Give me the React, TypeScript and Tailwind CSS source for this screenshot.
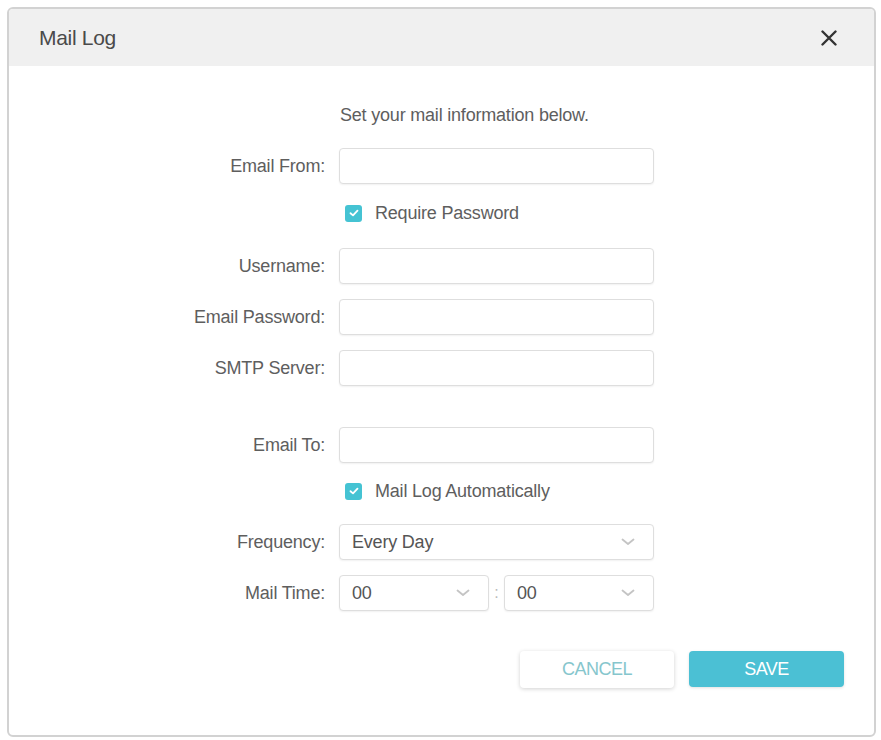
import React from "react";

const font = { fontFamily: '"Liberation Sans", Arial, sans-serif' };

function Label({ children }: { children: React.ReactNode }) {
  return (
    <div className="w-[316px] shrink-0 text-right text-[18px] leading-none text-[#5e5e5e] tracking-[-0.2px]">
      {children}
    </div>
  );
}

function TextInput() {
  return (
    <div className="ml-[14px] h-[36px] w-[315px] rounded-[4px] border border-[#dedede] bg-white shadow-[0_1px_2px_rgba(0,0,0,0.06)]" />
  );
}

function Chevron() {
  return (
    <svg width="14" height="8" viewBox="0 0 14 8" fill="none">
      <path d="M1.5 1.5 L7 6 L12.5 1.5" stroke="#c4c4c4" strokeWidth="1.8" strokeLinecap="round" strokeLinejoin="round" />
    </svg>
  );
}

function Select({ value, width }: { value: string; width: string }) {
  return (
    <div
      className={`flex h-[36px] ${width} items-center justify-between rounded-[4px] border border-[#dedede] bg-white pl-[12px] pr-[18px] text-[18px] text-[#555] tracking-[-0.2px] shadow-[0_1px_2px_rgba(0,0,0,0.06)]`}
    >
      <span>{value}</span>
      <Chevron />
    </div>
  );
}

function Check({ label }: { label: string }) {
  return (
    <div className="flex h-[24px] items-center">
      <div className="w-[316px] shrink-0" />
      <div className="ml-[20px] flex items-center">
        <div className="flex h-[17px] w-[17px] items-center justify-center rounded-[3px] bg-[#45c3d3]">
          <svg width="10" height="8" viewBox="0 0 10 8" fill="none">
            <path d="M1.5 4.2 L4 6.4 L8.5 1.6" stroke="white" strokeWidth="1.8" strokeLinecap="round" strokeLinejoin="round" />
          </svg>
        </div>
        <span className="ml-[13px] text-[18px] leading-none text-[#5e5e5e] tracking-[-0.2px]">{label}</span>
      </div>
    </div>
  );
}

function Row({ label, children, className = "" }: { label: string; children: React.ReactNode; className?: string }) {
  return (
    <div className={`flex items-center ${className}`}>
      <Label>{label}</Label>
      {children}
    </div>
  );
}

export default function App() {
  return (
    <div style={font} className="h-[740px] w-[881px] bg-white pl-[7px] pr-[5px] pt-[7px] pb-[3px]">
      <div className="flex h-full w-full flex-col overflow-hidden rounded-[6px] border-2 border-[#d2d2d2] bg-white">
        <div className="flex h-[57px] items-center justify-between bg-[#f0f0f0] pl-[30px] pr-[37px]">
          <span className="text-[21px] text-[#4a4a4a] tracking-[-0.3px]">Mail Log</span>
          <svg width="16" height="16" viewBox="0 0 16 16" fill="none">
            <path d="M1.5 1.5 L14.5 14.5 M14.5 1.5 L1.5 14.5" stroke="#333" strokeWidth="2.4" strokeLinecap="round" />
          </svg>
        </div>
        <div className="flex flex-col pt-[37px]">
          <div className="flex h-[24px] items-center">
            <div className="w-[316px] shrink-0" />
            <span className="ml-[15px] text-[18px] leading-none text-[#5e5e5e] tracking-[-0.2px]">
              Set your mail information below.
            </span>
          </div>
          <Row label="Email From:" className="mt-[21px]">
            <TextInput />
          </Row>
          <div className="mt-[17px]">
            <Check label="Require Password" />
          </div>
          <Row label="Username:" className="mt-[23px]">
            <TextInput />
          </Row>
          <Row label="Email Password:" className="mt-[15px]">
            <TextInput />
          </Row>
          <Row label="SMTP Server:" className="mt-[15px]">
            <TextInput />
          </Row>
          <Row label="Email To:" className="mt-[41px]">
            <TextInput />
          </Row>
          <div className="mt-[16px]">
            <Check label="Mail Log Automatically" />
          </div>
          <Row label="Frequency:" className="mt-[21px]">
            <div className="ml-[14px]">
              <Select value="Every Day" width="w-[315px]" />
            </div>
          </Row>
          <Row label="Mail Time:" className="mt-[15px]">
            <div className="ml-[14px] flex items-center">
              <Select value="00" width="w-[150px]" />
              <span className="w-[15px] text-center text-[16px] text-[#bbb]">:</span>
              <Select value="00" width="w-[150px]" />
            </div>
          </Row>
          <div className="mt-[40px] flex justify-end gap-[15px] pr-[30px]">
            <button className="h-[37px] w-[154px] rounded-[4px] bg-white text-[18px] text-[#86c6cd] tracking-[-0.5px] shadow-[0_1px_4px_rgba(0,0,0,0.18)]">
              CANCEL
            </button>
            <button className="h-[36px] w-[155px] rounded-[4px] bg-[#4bc0d4] text-[18px] text-white tracking-[-0.5px] shadow-[0_1px_3px_rgba(0,0,0,0.12)]">
              SAVE
            </button>
          </div>
        </div>
      </div>
    </div>
  );
}
